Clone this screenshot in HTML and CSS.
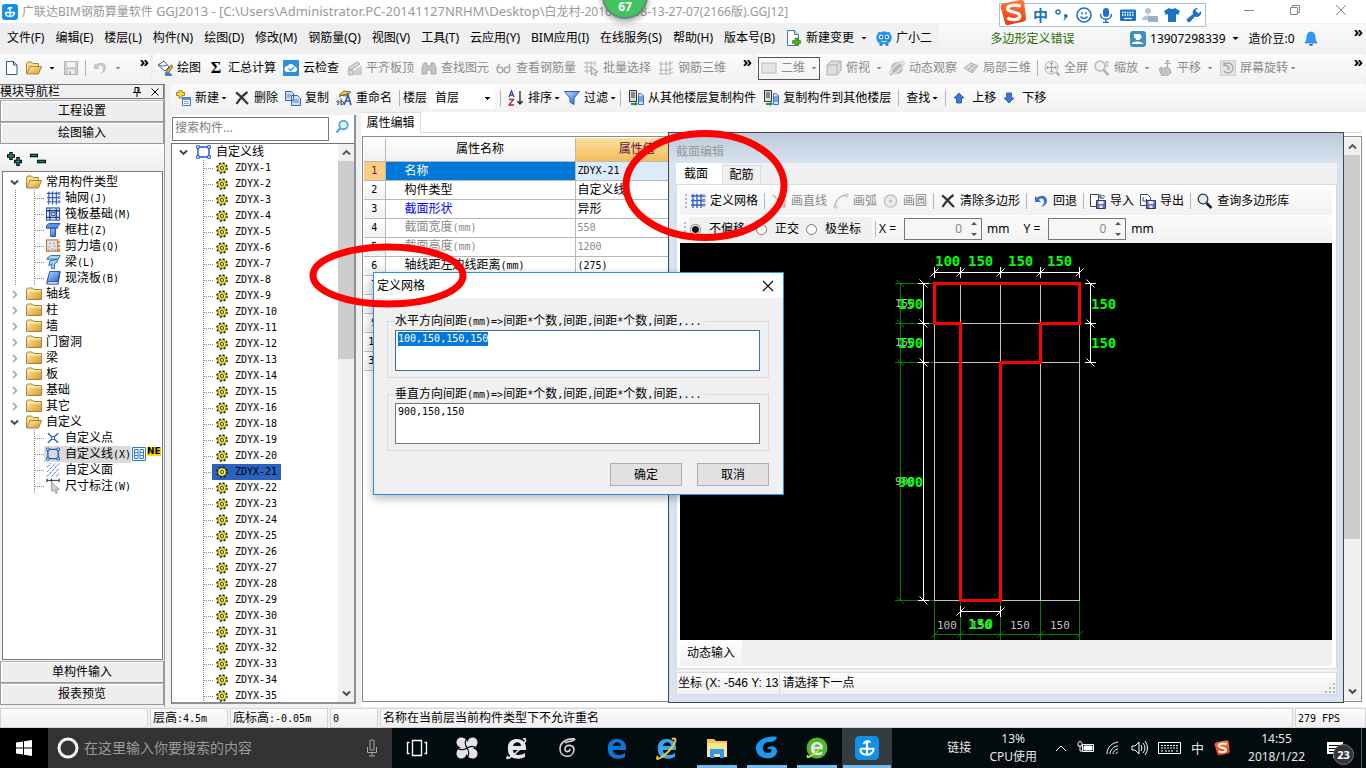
FILE: index.html
```html
<!DOCTYPE html>
<html lang="zh-CN">
<head>
<meta charset="utf-8">
<title>广联达BIM钢筋算量软件 GGJ2013</title>
<link rel="stylesheet" href="styles.css">
<script src="app.js" defer></script>
</head>
<body>
<svg class="defs" aria-hidden="true">
  <defs>
    <linearGradient id="gold" x1="0" y1="0" x2="1" y2="1"><stop offset="0" stop-color="#fff0b4"/><stop offset="1" stop-color="#d69a1e"/></linearGradient>
    <linearGradient id="blueg" x1="0" y1="0" x2="1" y2="1"><stop offset="0" stop-color="#b9dcff"/><stop offset="1" stop-color="#1f5fd0"/></linearGradient>
    <linearGradient id="orange" x1="0" y1="0" x2="0" y2="1"><stop offset="0" stop-color="#ff7a3c"/><stop offset="1" stop-color="#e8380d"/></linearGradient>
  </defs>
  <symbol id="i-app" viewBox="0 0 16 16"><rect width="16" height="16" rx="3" fill="#128fe8"/><path d="M6 5.500C6 3 10 3 10 4.500M8 3.500V12M3.500 8.500H13M3.500 8.500C3.500 11 5 12.500 8 12.500S12 11 12.500 9" fill="none" stroke="#fff" stroke-width="1.400"/></symbol>
  <symbol id="i-folder" viewBox="0 0 16 14"><path d="M.5 12.500v-10l1-1.500h5l1.500 1.500h7.500v10z" fill="url(#gold)" stroke="#a98434"/><path d="M1 4h14" stroke="#fff6cf"/></symbol>
  <symbol id="i-open" viewBox="0 0 16 14"><path d="M.5 12.500v-10l1-1.500h4l1.500 1.500h5.500v3" fill="#f5dc8c" stroke="#a98434"/><path d="M.8 13 4 5.500h11.500L12.500 13z" fill="url(#gold)" stroke="#a98434"/></symbol>
  <symbol id="i-new" viewBox="0 0 16 16"><path d="M2.500 1.500h7l3.500 3.500v9.500H2.500z" fill="#fff" stroke="#355a8c"/><path d="M9.500 1.500V5H13" fill="none" stroke="#355a8c"/></symbol>
  <symbol id="i-save" viewBox="0 0 16 16"><path d="M1.500 1.500h13v13h-13z" fill="#cfcfcf" stroke="#b4b4b4"/><path d="M4 2h8v5H4zM5 10h6v4H5z" fill="#f4f4f4"/><path d="M6 11h2v3H6z" fill="#b4b4b4"/></symbol>
  <symbol id="i-undo" viewBox="0 0 16 16"><path d="M2 3v6h6L5.800 6.800C8 4.500 11 5.500 11 8.500c0 2.500-1.500 4-3 5.500 4-1 6-3.500 6-6.500 0-5-6.500-6.500-10-2.700z" fill="currentColor"/></symbol>
  <symbol id="i-pen" viewBox="0 0 16 16"><path d="m1 5 6-4 5 6-4 4z" fill="#fff" stroke="#345c94"/><path d="M1 4c3 3 7 2 9 1" fill="none" stroke="#345c94"/><path d="M9 12 14 5l2 1.500-5 7-3 1z" fill="#e2b43c" stroke="#6a5010" stroke-width=".8"/><path d="M10 12c2 0 5 1 5 4H8z" fill="#3f7edb"/></symbol>
  <symbol id="i-cloud" viewBox="0 0 16 16"><rect width="16" height="16" rx="1" fill="#2b8fe0"/><path d="M4.500 12a3 3 0 0 1 0-6 3.800 3.800 0 0 1 7 .5A2.800 2.800 0 0 1 12 12z" fill="#fff"/><path d="m5.500 8.500 2 2 3.500-3.500" fill="none" stroke="#2b8fe0" stroke-width="1.300"/></symbol>
  <symbol id="i-align" viewBox="0 0 16 16"><path d="m2 8 9-6 3 2-9 6zM2 10h5v5H3z" fill="#d8d8d8" stroke="#a8a8a8"/><path d="M9 15v-5m2 5V8m2 7V7m2 8V6" stroke="#a8a8a8"/></symbol>
  <symbol id="i-bino" viewBox="0 0 16 16"><path d="M1 14V8l2-5h3v3h4V3h3l2 5v6h-5v-4H6v4z" fill="#c4c4c4" stroke="#9c9c9c" stroke-width=".8"/></symbol>
  <symbol id="i-glass" viewBox="0 0 16 16"><g fill="none" stroke="#a4a4a4" stroke-width="1.300"><circle cx="4" cy="10" r="2.800"/><circle cx="11" cy="10" r="2.800"/><path d="M1 9C1 6 2 5 4 4m9.800 5c0-3-.5-4-.8-5M7 10h1"/></g></symbol>
  <symbol id="i-batch" viewBox="0 0 16 16"><path d="M1 3h11M1 7h9M1 11h7M4 1v13M8 1v10M12 1v5" stroke="#b4b4b4" fill="none"/><path d="m8 7 7 5-3 .5 1.500 2.500-1.500.8-1.500-2.800L8.500 15z" fill="#e8e8e8" stroke="#a0a0a0"/></symbol>
  <symbol id="i-frame" viewBox="0 0 16 16"><path d="M1 4h10l4-2M1 10h10l4-2M3 1v13M8 1v13M12 1v13M1 14h10l4-2" stroke="#b0b0b0" fill="none"/></symbol>
  <symbol id="i-2d" viewBox="0 0 16 16"><rect x="1" y="3" width="14" height="10" fill="#e4e4e4" stroke="#bcbcbc"/></symbol>
  <symbol id="i-cube" viewBox="0 0 16 16"><path d="M1 5 5 1h10v9l-4 5H1z" fill="#dedede" stroke="#b0b0b0"/><path d="M1 5h10v10M11 5l4-4" fill="none" stroke="#b0b0b0"/></symbol>
  <symbol id="i-orbit" viewBox="0 0 16 16"><circle cx="8" cy="8" r="6" fill="#b8b8b8"/><ellipse cx="8" cy="8" rx="9" ry="3" transform="rotate(-40 8 8)" fill="none" stroke="#dcdcdc" stroke-width="2"/><path d="m1 15 5-4" stroke="#a8a8a8"/></symbol>
  <symbol id="i-part" viewBox="0 0 16 16"><path d="m1 8 7-5 7 3-6 7z" fill="#e4e4e4" stroke="#ababab"/><path d="m4 7 6 4M7 5l5 3M5 10l6-6M8 12l5-6" stroke="#ababab"/></symbol>
  <symbol id="i-full" viewBox="0 0 16 16"><circle cx="7.500" cy="7.500" r="6.500" fill="#eee" stroke="#b8b8b8"/><path d="M7.500 2.500v10m-5-5h10M6 4l1.500-1.500L9 4M6 11l1.500 1.500L9 11M4 6 2.500 7.500 4 9m7-3 1.500 1.500L11 9" fill="none" stroke="#a0a0a0"/><path d="m12 12 3.500 3.500" stroke="#aaa" stroke-width="2"/></symbol>
  <symbol id="i-zoom" viewBox="0 0 16 16"><circle cx="6" cy="6" r="5" fill="#f0f0f0" stroke="#b8b8b8" stroke-width="1.500"/><path d="m9.500 10 5 5" stroke="#b0b0b0" stroke-width="2.500"/><path d="M13 1v5m-2-3 2-2 2 2m-4 3h4" stroke="#b0b0b0" fill="none"/></symbol>
  <symbol id="i-hand" viewBox="0 0 16 16"><path d="M2 9 5 7l-1 3 3-2 3-1 3 2 1 4-4 3H5z" fill="#c4c4c4" stroke="#acacac"/><path d="M10.500 0v7M7 3.500h7M9 2l1.500-2L12 2" stroke="#acacac" stroke-width="1.200" fill="none"/></symbol>
  <symbol id="i-rot" viewBox="0 0 16 16"><rect x=".5" y=".5" width="15" height="15" fill="#e4e4e4" stroke="#d0d0d0"/><path d="M4 5a5 5 0 1 1 0 6M4 2v3.500h3.500" fill="none" stroke="#aaa" stroke-width="1.400"/><path d="M7 6h3v4H7z" fill="#bbb"/></symbol>
  <symbol id="i-add" viewBox="0 0 16 16"><path d="M4 0h3v2.500h2.500v3H7V8H4V5.500H1.500v-3H4z" fill="#ffd83c" stroke="#8a6d10" stroke-width=".8"/><path d="M7.500 7.500h8v8h-8z" fill="#fff" stroke="#4a7cc0"/><path d="M8 8h7v2H8z" fill="#5a94e0"/><path d="M9 11.500h5m-5 2h5" stroke="#8cb0dc"/></symbol>
  <symbol id="i-x" viewBox="0 0 16 16"><path d="M2 2.500C6 5 10 10 14 14M13.500 2C9 5 5 10 2.500 14" fill="none" stroke="#333" stroke-width="2.200"/></symbol>
  <symbol id="i-copy" viewBox="0 0 16 16"><path d="M.5 1.500h6l2 2v7h-8zM6.500 5.500h6l3 3v7h-9z" fill="#cfe2fb" stroke="#3a62a8"/><path d="M2 5h4M2 7h3m3 3h6m-6 2h6" stroke="#5584c8"/></symbol>
  <symbol id="i-rename" viewBox="0 0 16 16"><path d="m3 5 5-4 7 1-5 4z" fill="#f2ca4c" stroke="#886c14"/><path d="M3 7c3-3 6-1 9-4" stroke="#555" fill="none"/><path d="M1 14.500c3 0 2-4 1-4s-2 2 0 2m3-4v6c4 0 3-4 0-3" stroke="#333" fill="none"/><path d="m8 15 4-10 3 10m-5-4h4" fill="none" stroke="#2a5cc0" stroke-width="1.600"/></symbol>
  <symbol id="i-az" viewBox="0 0 16 16"><path d="m1 7 2.500-6L6 7M2 5h3" fill="none" stroke="#2c4ca8" stroke-width="1.300"/><path d="M1 9.500h4.500L1 15h5" fill="none" stroke="#a03030" stroke-width="1.300"/><path d="M12 1v13m-2.500-3 2.500 3 2.500-3" fill="none" stroke="#222" stroke-width="1.300"/></symbol>
  <symbol id="i-filter" viewBox="0 0 16 16"><path d="M.5 1.500h15L10 8v6.500L6 12V8z" fill="url(#blueg)" stroke="#2a5cb8"/></symbol>
  <symbol id="i-floor" viewBox="0 0 16 16"><path d="M1.500.5h7v11h-7z" fill="#ddd" stroke="#333"/><path d="M3 3h4M3 5h4M3 7h4" stroke="#333"/><path d="M10.500 3.500h2l3 2v9h-5z" fill="#cfe2fb" stroke="#3a72c8"/><path d="M11 7h4m-4 2h4m-4 2h4" stroke="#2a62c8"/><path d="M3 13h4v-2l3 3-3 2v-1H3z" fill="#20963a"/></symbol>
  <symbol id="i-up" viewBox="0 0 12 12"><path d="m6 1 5 5H8.500v5h-5V6H1z" fill="#3d74dc" stroke="#2450a8" stroke-width=".8"/></symbol>
  <symbol id="i-down" viewBox="0 0 12 12"><path d="M6 11 1 6h2.500V1h5v5H11z" fill="#3d74dc" stroke="#2450a8" stroke-width=".8"/></symbol>
  <symbol id="i-doc" viewBox="0 0 16 16"><path d="M1.500.5h7l4 4v11h-11z" fill="#fff" stroke="#3a7cc0"/><path d="M8.500.5v4h4" fill="#cfe2fb" stroke="#3a7cc0"/><path d="M9 8h3v2.500h2.500v3H12V16H9v-2.500H6.500v-3H9z" fill="#4cb020" stroke="#2f7a10" stroke-width=".6"/></symbol>
  <symbol id="i-owl" viewBox="0 0 16 16"><path d="M8 1.500c2 0 3 .5 4 1 1.500-1 2.500 0 2 1.500C16 5.500 16 7 15.500 8c0 4-3 6-7.500 6S.5 12 .5 8C0 7 0 5.500 2 4 1.500 2.500 2.500 1.500 4 2.500c1-.5 2-1 4-1z" fill="#1e96ea"/><path d="M3.500 13.500h3v2.300h-3zm6 0h3v2.300h-3z" fill="#1779c8"/><circle cx="5" cy="7" r="2.200" fill="#fff"/><circle cx="11" cy="7" r="2.200" fill="#fff"/><circle cx="5.300" cy="7" r="1.100" fill="#123"/><circle cx="10.700" cy="7" r="1.100" fill="#123"/><path d="M5.500 11c1.500 1.200 3.500 1.200 5 0" fill="none" stroke="#fff"/></symbol>
  <symbol id="i-user" viewBox="0 0 16 16"><rect width="16" height="16" rx="3" fill="#3d8fc4"/><path d="M4 3h6l2 3-2 2v1H6V8L4 6z" fill="#fff"/><path d="M2 12c2-2 8-2 10 0l2 1H2z" fill="#fff"/></symbol>
  <symbol id="i-bell" viewBox="0 0 14 16"><path d="M7 1C4 1 3 3.500 3 6c0 3-1 4-2 6h12c-1-2-2-3-2-6 0-2.500-1-5-4-5z" fill="#2f9bf5" stroke="#1470c0" stroke-width=".6"/><path d="M5 13h4c0 2.500-4 2.500-4 0z" fill="#1470c0"/></symbol>
  <symbol id="i-grid" viewBox="0 0 16 16"><path d="M1 3h13M1 7.500h13M1 12h13M3 1v14M7 1v14M11 1v14" stroke="#2d5fc4" stroke-width="1.300" fill="none"/><path d="M13 2h2v2h-2zm0 4.500h2v2h-2zm0 4.500h2v2h-2z" fill="#fff" stroke="#2d5fc4" stroke-width=".8"/></symbol>
  <symbol id="i-raft" viewBox="0 0 16 16"><rect x=".5" y="1.500" width="14" height="13" fill="#dfeaff" stroke="#1c3f96"/><path d="M1 4.500h13M1 11.500h13M4 2v12M11 2v12" stroke="#1c3f96" stroke-width="1.400"/><path d="M6 6.500h3.500v3H6z" fill="#fff" stroke="#1c3f96"/></symbol>
  <symbol id="i-col" viewBox="0 0 16 16"><path d="M.5 3.500 3 1h12l-2.500 3v2H.5z" fill="#5f93e6" stroke="#1c4aa8"/><path d="M5 6h5v9H5z" fill="url(#blueg)" stroke="#1c4aa8"/></symbol>
  <symbol id="i-wall" viewBox="0 0 16 16"><rect x=".5" y="1.500" width="12" height="12" fill="#e2e2e2" stroke="#c05828"/><path d="M3 9h1m2 2h1m2-3h1M4 5h1m4 7h1M2 12h1m5-7h1" stroke="#555"/><path d="M14 3v2m0 2v2m0 2v3" stroke="#c8742c" stroke-width="2"/></symbol>
  <symbol id="i-beam" viewBox="0 0 16 16"><path d="M1 4 5 1h10l-2 4H1zM4 7l8-2v3l-3 2v5H6v-5L3 12z" fill="#a8d4f6" stroke="#1c66b8"/></symbol>
  <symbol id="i-slab" viewBox="0 0 16 16"><path d="M4 1h11l-2 11H1z" fill="url(#blueg)" stroke="#1c4aa8"/><path d="M1 12v2.500h12V12l2-11" fill="none" stroke="#1c3f96"/></symbol>
  <symbol id="i-point" viewBox="0 0 16 16"><path d="m2 3 11 10M13 3 2 13" stroke="#1c56b8" stroke-width="1.300"/><path d="M6 6.500h3v3H6z" fill="#fff" stroke="#1c56b8"/></symbol>
  <symbol id="i-line" viewBox="0 0 16 16"><path d="M2 3h11v10H2z" fill="none" stroke="#1c56c8" stroke-width="1.400"/><path d="M.7 1.700h2.600v2.600H.7zm11 0h2.600v2.600h-2.600zm0 10h2.600v2.600h-2.600zm-11 0h2.600v2.600H.7z" fill="#fff" stroke="#1c56c8"/></symbol>
  <symbol id="i-face" viewBox="0 0 16 16"><path d="m1 5 4-4M1 10l9-9M1 15 14 1M6 15l8-9m-3 9 3-4" stroke="#2a66d0" stroke-dasharray="3 1"/></symbol>
  <symbol id="i-dim" viewBox="0 0 16 16"><path d="M1 0v4M14 0v4M6 0v4M1 2h13" stroke="#222"/><path d="M6 4v10l2.500-2 2 4 2-1-2-3.500h3.500z" fill="#d4d4d4" stroke="#888" stroke-width=".8"/></symbol>
  <symbol id="i-gear" viewBox="0 0 11 11"><circle cx="5.500" cy="5.500" r="4" fill="#ffee20"/><circle cx="5.500" cy="5.500" r="4.700" fill="none" stroke="#111" stroke-width="1.200" stroke-dasharray="1.900 1.790"/><circle cx="5.500" cy="5.500" r="3.700" fill="none" stroke="#333" stroke-width=".6"/><circle cx="5.500" cy="5.500" r="1.500" fill="none" stroke="#222" stroke-width=".8"/></symbol>
  <symbol id="i-find" viewBox="0 0 16 16"><circle cx="9.500" cy="6" r="4.200" fill="#e4f4ff" stroke="#55aee8" stroke-width="2"/><path d="m6.500 9-4 4.500" stroke="#55aee8" stroke-width="2.600"/></symbol>
  <symbol id="i-mag" viewBox="0 0 16 16"><circle cx="6" cy="6" r="4.800" fill="#dff0fc" stroke="#333" stroke-width="1.300"/><path d="m9.500 10 5 5" stroke="#222" stroke-width="2.600"/></symbol>
  <symbol id="i-seg" viewBox="0 0 16 16"><path d="m2 2 11 11m-6 1h7V7" fill="none" stroke="#bdbdbd" stroke-width="1.600"/></symbol>
  <symbol id="i-arc" viewBox="0 0 16 16"><path d="M2 14C2 8 6 3 13 2" fill="none" stroke="#bdbdbd" stroke-width="1.400"/><path d="M1 12h3v3H1zm11-11h3v3h-3z" fill="#ddd" stroke="#bbb" stroke-width=".6"/></symbol>
  <symbol id="i-circ" viewBox="0 0 16 16"><circle cx="7.500" cy="8" r="6.200" fill="#eaeaea" stroke="#bdbdbd" stroke-width="1.300"/><circle cx="7.500" cy="8" r="1.200" fill="#b0b0b0"/></symbol>
  <symbol id="i-imp" viewBox="0 0 16 16"><path d="M.5 1.500h8v12h-8z" fill="#fff" stroke="#444"/><path d="M10 1v4h4m-4-1c2-2 4-2 5 0" fill="none" stroke="#345"/><path d="M6.500 7.500h9v8h-9z" fill="#6b6fc4" stroke="#2f2f7c"/><path d="M8.500 8h5v3h-5zm1 4.500h3V15h-3z" fill="#eee"/></symbol>
  <symbol id="i-exp" viewBox="0 0 16 16"><path d="M.5 1.500h7l3 3v8H.5z" fill="#fff" stroke="#446"/><path d="M3 4v4h5m-2-2 2 2-2 2" fill="none" stroke="#345"/><path d="M6.500 7.500h9v8h-9z" fill="#6b6fc4" stroke="#2f2f7c"/><path d="M8.500 8h5v3h-5zm1 4.500h3V15h-3z" fill="#eee"/></symbol>
  <symbol id="i-e" viewBox="0 0 24 24"><path d="M3 14C2 7 6 3 12 3s9 4 9 9v2H8c0 6 8 6 12 3v4C12 25 3 22 3 14zm5-4h8c0-5-7-5-8 0z" fill="currentColor"/></symbol>
  <symbol id="i-s" viewBox="0 0 28 28"><path d="M3 5Q13 2 23 1q2 0 2.500 2l2 17q0 3-3 3.500L9 27q-3 0-3.500-3L1 8q0-2 2-3z" fill="url(#orange)"/><path d="M22 7.500C15 5 8 7 8.500 10.500S21 13 21 17.500s-9 5-13 2" fill="none" stroke="#fff" stroke-width="3.400"/></symbol>
  <symbol id="tick-x" viewBox="-6 -6 12 12" overflow="visible"><path d="M0-5.500v11M-4 4l8-8" fill="none" stroke="currentColor"/></symbol>
  <symbol id="tick-y" viewBox="-6 -6 12 12" overflow="visible"><path d="M-5.500 0h11M-4-4l8 8" fill="none" stroke="currentColor"/></symbol>
  <symbol id="c-down" viewBox="0 0 9 9"><path d="m1 2.500 3.500 3.500L8 2.500" fill="none" stroke="#444" stroke-width="1.900"/></symbol>
  <symbol id="c-up" viewBox="0 0 9 9"><path d="M1 6.500 4.500 3 8 6.500" fill="none" stroke="#555" stroke-width="1.900"/></symbol>
  <symbol id="c-right" viewBox="0 0 9 9"><path d="m3 1 3.500 3.500L3 8" fill="none" stroke="#a0a0a0" stroke-width="1.500"/></symbol>
</svg>

<div class="app">
<header class="titlebar">
  <svg class="ic"><use href="#i-app"/></svg>
  <h1>广联达BIM钢筋算量软件 <span class="path">GGJ2013 - [C:\Users\Administrator.PC-20141127NRHM\Desktop\</span>白龙村-2016-10-08-13-27-07(2166版).GGJ12]</h1>
  <div class="winbtns">
    <button aria-label="最小化"><svg viewBox="0 0 12 12"><path d="M1 6.500h10"/></svg></button>
    <button aria-label="还原"><svg viewBox="0 0 12 12"><path d="M1.500 3.500h7v7h-7zM3.500 3.500v-2h7v7h-2"/></svg></button>
    <button aria-label="关闭"><svg viewBox="0 0 12 12"><path d="m1 1 10 10M11 1 1 11"/></svg></button>
  </div>
</header>

<nav class="menubar">
  <button>文件(F)</button><button>编辑(E)</button><button>楼层(L)</button><button>构件(N)</button><button>绘图(D)</button><button>修改(M)</button><button>钢筋量(Q)</button><button>视图(V)</button><button>工具(T)</button><button>云应用(Y)</button><button>BIM应用(I)</button><button>在线服务(S)</button><button>帮助(H)</button><button>版本号(B)</button>
  <button class="tb"><svg class="ic"><use href="#i-doc"/></svg>新建变更<i class="caret"></i></button>
  <button class="tb"><svg class="ic"><use href="#i-owl"/></svg>广小二</button>
  <div class="notice">多边形定义错误</div>
  <div class="account">
    <button class="tb"><svg class="ic"><use href="#i-user"/></svg>13907298339<i class="caret"></i></button>
    <button>造价豆:0</button>
    <svg class="ic"><use href="#i-bell"/></svg>
    <b class="more">»</b>
  </div>
</nav>

<div class="toolrow">
  <div class="bar bar-a">
    <button class="tb" aria-label="新建"><svg class="ic"><use href="#i-new"/></svg></button>
    <button class="tb" aria-label="打开"><svg class="ic"><use href="#i-open"/></svg><i class="caret"></i></button>
    <button class="tb" aria-label="保存"><svg class="ic"><use href="#i-save"/></svg></button>
    <i class="sep"></i>
    <button class="tb off" aria-label="撤销"><svg class="ic pale"><use href="#i-undo"/></svg><i class="caret"></i></button>
    <b class="more">»</b>
  </div>
  <div class="bar bar-b">
    <button class="tb"><svg class="ic"><use href="#i-pen"/></svg>绘图</button>
    <button class="tb"><b class="ic sigma">Σ</b>汇总计算</button>
    <button class="tb"><svg class="ic"><use href="#i-cloud"/></svg>云检查</button>
    <button class="tb off"><svg class="ic"><use href="#i-align"/></svg>平齐板顶</button>
    <button class="tb off"><svg class="ic"><use href="#i-bino"/></svg>查找图元</button>
    <button class="tb off"><svg class="ic"><use href="#i-glass"/></svg>查看钢筋量</button>
    <button class="tb off"><svg class="ic"><use href="#i-batch"/></svg>批量选择</button>
    <button class="tb off"><svg class="ic"><use href="#i-frame"/></svg>钢筋三维</button>
    <b class="more">»</b>
  </div>
  <div class="bar bar-c">
    <button class="tb off boxed"><svg class="ic"><use href="#i-2d"/></svg>二维<i class="caret"></i></button>
    <button class="tb off"><svg class="ic"><use href="#i-cube"/></svg>俯视<i class="caret"></i></button>
    <button class="tb off"><svg class="ic"><use href="#i-orbit"/></svg>动态观察</button>
    <button class="tb off"><svg class="ic"><use href="#i-part"/></svg>局部三维</button>
    <i class="sep"></i>
    <button class="tb off"><svg class="ic"><use href="#i-full"/></svg>全屏</button>
    <button class="tb off"><svg class="ic"><use href="#i-zoom"/></svg>缩放<i class="caret"></i></button>
    <button class="tb off"><svg class="ic"><use href="#i-hand"/></svg>平移<i class="caret"></i></button>
    <button class="tb off tight"><svg class="ic"><use href="#i-rot"/></svg>屏幕旋转<i class="caret"></i></button>
    <b class="more">»</b>
  </div>
</div>

<div class="workspace">
  <aside class="nav">
    <div class="navhead"><span>模块导航栏</span>
      <svg viewBox="0 0 10 12" class="pin"><path d="M3 1.500h4v5H3zM1 6.500h8M5 7v4M6 2v4" fill="none" stroke="#000"/></svg>
      <svg viewBox="0 0 10 12" class="pin"><path d="m1.500 2.500 7 7m0-7-7 7" stroke="#000"/></svg>
    </div>
    <button class="navbtn">工程设置</button>
    <button class="navbtn">绘图输入</button>
    <div class="navtools">
      <svg viewBox="0 0 40 16" width="40" height="16"><path d="M5 1v8M1 5h8m3 1v9m-4-4.500h8M24 4.500h8M31 10.500h9" stroke="#000" stroke-width="3.400"/><path d="M5 2v6M2 5h6m4 2v7m-3-3.500h6M25 4.500h6m1 6h7" stroke="#10908c" stroke-width="1.400"/></svg>
    </div>
    <ul class="tree navtree">
      <li class="l1"><svg class="chev"><use href="#c-down"/></svg><svg class="fold"><use href="#i-open"/></svg>常用构件类型</li>
      <li class="l2 thru"><svg class="ic"><use href="#i-grid"/></svg><span>轴网<i class="m">(J)</i></span></li>
      <li class="l2 thru"><svg class="ic"><use href="#i-raft"/></svg><span>筏板基础<i class="m">(M)</i></span></li>
      <li class="l2 thru"><svg class="ic"><use href="#i-col"/></svg><span>框柱<i class="m">(Z)</i></span></li>
      <li class="l2 thru"><svg class="ic"><use href="#i-wall"/></svg><span>剪力墙<i class="m">(Q)</i></span></li>
      <li class="l2 thru"><svg class="ic"><use href="#i-beam"/></svg><span>梁<i class="m">(L)</i></span></li>
      <li class="l2 thru end"><svg class="ic"><use href="#i-slab"/></svg><span>现浇板<i class="m">(B)</i></span></li>
      <li class="l1 shut"><svg class="chev"><use href="#c-right"/></svg><svg class="fold"><use href="#i-folder"/></svg>轴线</li>
      <li class="l1 shut"><svg class="chev"><use href="#c-right"/></svg><svg class="fold"><use href="#i-folder"/></svg>柱</li>
      <li class="l1 shut"><svg class="chev"><use href="#c-right"/></svg><svg class="fold"><use href="#i-folder"/></svg>墙</li>
      <li class="l1 shut"><svg class="chev"><use href="#c-right"/></svg><svg class="fold"><use href="#i-folder"/></svg>门窗洞</li>
      <li class="l1 shut"><svg class="chev"><use href="#c-right"/></svg><svg class="fold"><use href="#i-folder"/></svg>梁</li>
      <li class="l1 shut"><svg class="chev"><use href="#c-right"/></svg><svg class="fold"><use href="#i-folder"/></svg>板</li>
      <li class="l1 shut"><svg class="chev"><use href="#c-right"/></svg><svg class="fold"><use href="#i-folder"/></svg>基础</li>
      <li class="l1 shut"><svg class="chev"><use href="#c-right"/></svg><svg class="fold"><use href="#i-folder"/></svg>其它</li>
      <li class="l1"><svg class="chev"><use href="#c-down"/></svg><svg class="fold"><use href="#i-open"/></svg>自定义</li>
      <li class="l2"><svg class="ic"><use href="#i-point"/></svg><span>自定义点</span></li>
      <li class="l2 cur"><svg class="ic"><use href="#i-line"/></svg><span class="curtext">自定义线<i class="m">(X)</i></span><svg class="book" viewBox="0 0 14 14"><path d="M.5.500h13v13H.5z" fill="#fff" stroke="#2a7cd0"/><path d="M2.500 2.500h3.500v9H2.500zM8 2.500h3.500v9H8zM2.500 5.500H6m-3.500 3H6m2-3h3.500m-3.500 3h3.500" fill="none" stroke="#2a7cd0"/></svg><b class="new">NE</b></li>
      <li class="l2"><svg class="ic"><use href="#i-face"/></svg><span>自定义面</span></li>
      <li class="l2 end"><svg class="ic"><use href="#i-dim"/></svg><span>尺寸标注<i class="m">(W)</i></span></li>
    </ul>
    <button class="navbtn">单构件输入</button>
    <button class="navbtn">报表预览</button>
  </aside>

  <main class="main">
    <div class="bar bar-d">
      <button class="tb tight"><svg class="ic"><use href="#i-add"/></svg>新建<i class="caret"></i></button>
      <button class="tb"><svg class="ic"><use href="#i-x"/></svg>删除</button>
      <button class="tb"><svg class="ic"><use href="#i-copy"/></svg>复制</button>
      <button class="tb"><svg class="ic"><use href="#i-rename"/></svg>重命名</button>
      <i class="sep"></i>
      <label class="floorlabel" for="floor">楼层</label>
      <select id="floor"><option>首层</option></select>
      <i class="sep"></i>
      <button class="tb tight close"><svg class="ic"><use href="#i-az"/></svg>排序<i class="caret"></i></button>
      <button class="tb tight close"><svg class="ic"><use href="#i-filter"/></svg>过滤<i class="caret"></i></button>
      <i class="sep"></i>
      <button class="tb"><svg class="ic"><use href="#i-floor"/></svg>从其他楼层复制构件</button>
      <button class="tb"><svg class="ic"><use href="#i-floor"/></svg>复制构件到其他楼层</button>
      <i class="sep"></i>
      <button class="tb tight">查找<i class="caret"></i></button>
      <i class="sep"></i>
      <button class="tb mv"><svg class="ic sm"><use href="#i-up"/></svg>上移</button>
      <button class="tb mv"><svg class="ic sm"><use href="#i-down"/></svg>下移</button>
    </div>
    <div class="panes">
      <section class="list">
        <div class="search"><input type="text" placeholder="搜索构件..." aria-label="搜索构件"><button aria-label="搜索"><svg class="ic"><use href="#i-find"/></svg></button></div>
        <div class="listbox">
          <ul class="tree">
            <li class="root"><svg class="chev"><use href="#c-down"/></svg><svg class="ic"><use href="#i-line"/></svg>自定义线</li>
            <li class="z"><span><svg><use href="#i-gear"/></svg>ZDYX-1</span></li>
            <li class="z"><span><svg><use href="#i-gear"/></svg>ZDYX-2</span></li>
            <li class="z"><span><svg><use href="#i-gear"/></svg>ZDYX-3</span></li>
            <li class="z"><span><svg><use href="#i-gear"/></svg>ZDYX-4</span></li>
            <li class="z"><span><svg><use href="#i-gear"/></svg>ZDYX-5</span></li>
            <li class="z"><span><svg><use href="#i-gear"/></svg>ZDYX-6</span></li>
            <li class="z"><span><svg><use href="#i-gear"/></svg>ZDYX-7</span></li>
            <li class="z"><span><svg><use href="#i-gear"/></svg>ZDYX-8</span></li>
            <li class="z"><span><svg><use href="#i-gear"/></svg>ZDYX-9</span></li>
            <li class="z"><span><svg><use href="#i-gear"/></svg>ZDYX-10</span></li>
            <li class="z"><span><svg><use href="#i-gear"/></svg>ZDYX-11</span></li>
            <li class="z"><span><svg><use href="#i-gear"/></svg>ZDYX-12</span></li>
            <li class="z"><span><svg><use href="#i-gear"/></svg>ZDYX-13</span></li>
            <li class="z"><span><svg><use href="#i-gear"/></svg>ZDYX-14</span></li>
            <li class="z"><span><svg><use href="#i-gear"/></svg>ZDYX-15</span></li>
            <li class="z"><span><svg><use href="#i-gear"/></svg>ZDYX-16</span></li>
            <li class="z"><span><svg><use href="#i-gear"/></svg>ZDYX-18</span></li>
            <li class="z"><span><svg><use href="#i-gear"/></svg>ZDYX-19</span></li>
            <li class="z"><span><svg><use href="#i-gear"/></svg>ZDYX-20</span></li>
            <li class="z on"><span><svg><use href="#i-gear"/></svg>ZDYX-21</span></li>
            <li class="z"><span><svg><use href="#i-gear"/></svg>ZDYX-22</span></li>
            <li class="z"><span><svg><use href="#i-gear"/></svg>ZDYX-23</span></li>
            <li class="z"><span><svg><use href="#i-gear"/></svg>ZDYX-24</span></li>
            <li class="z"><span><svg><use href="#i-gear"/></svg>ZDYX-25</span></li>
            <li class="z"><span><svg><use href="#i-gear"/></svg>ZDYX-26</span></li>
            <li class="z"><span><svg><use href="#i-gear"/></svg>ZDYX-27</span></li>
            <li class="z"><span><svg><use href="#i-gear"/></svg>ZDYX-28</span></li>
            <li class="z"><span><svg><use href="#i-gear"/></svg>ZDYX-29</span></li>
            <li class="z"><span><svg><use href="#i-gear"/></svg>ZDYX-30</span></li>
            <li class="z"><span><svg><use href="#i-gear"/></svg>ZDYX-31</span></li>
            <li class="z"><span><svg><use href="#i-gear"/></svg>ZDYX-32</span></li>
            <li class="z"><span><svg><use href="#i-gear"/></svg>ZDYX-33</span></li>
            <li class="z"><span><svg><use href="#i-gear"/></svg>ZDYX-34</span></li>
            <li class="z"><span><svg><use href="#i-gear"/></svg>ZDYX-35</span></li>
          </ul>
          <div class="scroll"><svg><use href="#c-up"/></svg><i class="thumb short"></i><svg><use href="#c-down"/></svg></div>
        </div>
      </section>

      <section class="props">
        <div class="proptabs"><button>属性编辑</button></div>
        <div class="propbox">
          <div class="tablewrap">
          <table>
            <thead><tr><th class="n"></th><th class="k">属性名称</th><th class="v">属性值</th></tr></thead>
            <tbody>
              <tr class="sel"><th>1</th><td>名称</td><td><i class="m">ZDYX-21</i></td></tr>
              <tr><th>2</th><td>构件类型</td><td>自定义线</td></tr>
              <tr class="link"><th>3</th><td>截面形状</td><td>异形</td></tr>
              <tr class="dim"><th>4</th><td>截面宽度<i class="m">(mm)</i></td><td><i class="m">550</i></td></tr>
              <tr class="dim"><th>5</th><td>截面高度<i class="m">(mm)</i></td><td><i class="m">1200</i></td></tr>
              <tr><th>6</th><td>轴线距左边线距离<i class="m">(mm)</i></td><td><i class="m">(275)</i></td></tr>
              <tr><th>7</th><td></td><td></td></tr>
              <tr><th>8</th><td></td><td></td></tr>
              <tr><th>9</th><td></td><td></td></tr>
              <tr><th>10</th><td></td><td></td></tr>
              <tr><th>30</th><td></td><td></td></tr>
            </tbody>
          </table>
          </div>
          <div class="scroll"><svg><use href="#c-up"/></svg><i class="thumb long"></i><svg><use href="#c-down"/></svg></div>
        </div>
      </section>
    </div>
  </main>
</div>

<footer class="status">
  <span class="s1"></span><span class="s2">层高<i class="m">:4.5m</i></span><span class="s3">底标高<i class="m">:-0.05m</i></span><span class="s4"><i class="m">0</i></span><span class="s5">名称在当前层当前构件类型下不允许重名</span><span class="s6"><i class="m">279 FPS</i></span>
</footer>

<footer class="taskbar">
  <button class="start" aria-label="开始"><svg width="18" height="18" viewBox="0 0 18 18"><path d="m1 3.500 7-1v6H1zM9 2.300l8-1.300v7.500H9zM1 9.500h7v6l-7-1zM9 9.500h8V17l-8-1.300z" fill="#fff"/></svg></button>
  <label class="cortana"><svg width="22" height="22" viewBox="0 0 22 22"><circle cx="11" cy="11" r="9" fill="none" stroke="#f4f4f4" stroke-width="3"/></svg><input type="text" placeholder="在这里输入你要搜索的内容"><svg width="12" height="18" viewBox="0 0 12 18"><path d="M4 1.500q2-1.500 4 0V11H4zM1.500 8v5.500h9V8M6 13.500V17M3 17h6" fill="none" stroke="#a8a8a8"/></svg></label>
  <div class="apps">
    <button aria-label="任务视图"><svg viewBox="0 0 24 24"><path d="M7.500 4.500h9v15h-9zM4.500 6.500h-2v11h2m15-11h2v11h-2" fill="none" stroke="#fff" stroke-width="1.300"/></svg></button>
    <button aria-label="风扇"><svg viewBox="0 0 24 24" fill="#e4e4e4"><path id="blade" d="M12.500 12C8 13.500 1.500 11 1.500 6.500c0-3 2-5 5-5 4.500 0 7.500 5 6 10.500z"/><use href="#blade" transform="rotate(90 12 12)"/><use href="#blade" transform="rotate(180 12 12)"/><use href="#blade" transform="rotate(270 12 12)"/><path d="M12 12C10 9 10 5 12 2.500m0 9.500c3-2 7-2 9.500 0M12 12c2 3 2 7 0 9.500m0-9.500c-3 2-7 2-9.500 0" fill="none" stroke="#071012" stroke-width="1.200"/></svg></button>
    <button aria-label="浏览器" class="c-white"><svg viewBox="0 0 24 24"><use href="#i-e"/><path d="M3 20C-1 26 8 20 14 14S23 1 18 3" fill="none" stroke="#e8e8e8" stroke-width="1.600"/></svg></button>
    <button aria-label="旋风"><svg viewBox="0 0 24 24"><path d="M20 3c-8-1-15 3-15 10 0 9 13 10 14 1 0-6-9-6-9-1 0 4 5 3 5 0M20 3c-1 3-7 2-10 4" fill="none" stroke="#d8d8d8" stroke-width="1.600"/></svg></button>
    <button aria-label="Edge" class="c-edge"><svg viewBox="0 0 24 24"><use href="#i-e"/></svg></button>
    <button aria-label="IE" class="c-ie"><svg viewBox="0 0 24 24"><use href="#i-e"/><path d="M3 20C-1 27 9 20 14 15S24 0 17 3" fill="none" stroke="#f5c82c" stroke-width="2"/></svg></button>
    <button aria-label="文件资源管理器" class="open"><svg viewBox="0 0 24 24"><path d="M2 3h7l2 2h11v16H2z" fill="#f3c650"/><path d="M2 7h20v14H2z" fill="#ffe28c"/><path d="M5 13h14v9h-4v-4H9v4H5z" fill="#2f9be8"/></svg></button>
    <button aria-label="广联达" class="open"><svg viewBox="0 0 24 24"><path d="M22 1c-1 4-4 5-9 5-7 1-7 11 0 11 3 0 4-2 3-4h-4c2-5 11-3 10 3-1 9-20 9-21-3C0 4 12-1 22 1z" fill="#1c98f0"/></svg></button>
    <button aria-label="360浏览器" class="open c-white"><svg viewBox="0 0 24 24"><circle cx="12" cy="12" r="10.500" fill="#4cb82c"/><use href="#i-e" x="4" y="4" width="16" height="16"/><path d="M3 19C0 25 9 18 14 14" fill="none" stroke="#c8e84c" stroke-width="1.500"/></svg></button>
    <button aria-label="钢筋算量" class="open active"><svg viewBox="0 0 16 16"><use href="#i-app"/></svg></button>
  </div>
  <div class="tray">
    <span>链接</span>
    <span class="two">13%<br>CPU使用</span>
    <svg width="12" height="16" viewBox="0 0 12 16"><path d="m1 11 5-5 5 5"/></svg>
    <svg width="18" height="16" viewBox="0 0 18 16"><path d="M5.500 4.500h11v7h-11zM1 3v3h4V3M3 6v5h2M2 1v2m2-2v2"/><path d="M7 6h8v4H7z" fill="#fff"/></svg>
    <svg width="16" height="16" viewBox="0 0 16 16"><path d="M2 14C2 7 7 3 13 2M5 14c0-4 4-8 8-8M8 14c0-2 2-5 5-5m-2 5c0-1 1-2 2-2"/></svg>
    <svg width="17" height="16" viewBox="0 0 17 16"><path d="M1 6h3l4-4v12l-4-4H1zM10 5q2 3 0 6m2-8q4 5 0 10m2-12q5 7 0 14"/></svg>
    <svg width="23" height="16" viewBox="0 0 23 16"><path d="M.5 2.500h22v11H.5z"/><path d="M3 5.500h17M3 8h17M3 11h2m2 0h9m2 0h2" stroke-dasharray="2 1"/></svg>
    <span class="zh">中</span>
    <svg width="16" height="18" viewBox="0 0 28 28" class="nostroke"><use href="#i-s"/></svg>
    <time class="two">14:55<br>2018/1/22</time>
    <button class="action" aria-label="通知"><svg width="18" height="18" viewBox="0 0 18 18"><path d="M1 1h16v12h-6l-4 4v-4H1z" fill="#fff" stroke="none"/><path d="M3 4.500h12M3 7.500h12M3 10.500h8" stroke="#000"/></svg><b>23</b></button>
  </div>
</footer>

<section class="editor">
  <h2>截面编辑</h2>
  <div class="ebody">
    <div class="etabs"><button class="on">截面</button><button>配筋</button></div>
    <div class="epanel">
      <div class="bar ebar tools">
        <i class="grip"></i>
        <button class="tb"><svg class="ic"><use href="#i-grid"/></svg>定义网格</button>
        <i class="sep"></i>
        <button class="tb off"><svg class="ic"><use href="#i-seg"/></svg>画直线</button>
        <button class="tb off"><svg class="ic"><use href="#i-arc"/></svg>画弧</button>
        <button class="tb off"><svg class="ic"><use href="#i-circ"/></svg>画圆</button>
        <i class="sep"></i>
        <button class="tb"><svg class="ic"><use href="#i-x"/></svg>清除多边形</button>
        <i class="sep"></i>
        <button class="tb"><svg class="ic undo"><use href="#i-undo"/></svg>回退</button>
        <i class="sep"></i>
        <button class="tb"><svg class="ic"><use href="#i-imp"/></svg>导入</button>
        <button class="tb"><svg class="ic"><use href="#i-exp"/></svg>导出</button>
        <i class="sep"></i>
        <button class="tb"><svg class="ic"><use href="#i-mag"/></svg>查询多边形库</button>
      </div>
      <div class="bar ebar">
        <i class="grip"></i>
        <div class="radios">
          <label><input type="radio" name="off" checked>不偏移</label>
          <label><input type="radio" name="off">正交</label>
          <label><input type="radio" name="off">极坐标</label>
        </div>
        <i class="sep"></i>
        <label class="xy" for="ox">X =</label>
        <span class="num"><input id="ox" type="text" value="0"><svg viewBox="0 0 8 16"><path d="m1 4 3-3 3 3zm0 8 3 3 3-3z" fill="#555"/></svg></span>
        <span class="mm">mm</span>
        <label class="xy" for="oy">Y =</label>
        <span class="num"><input id="oy" type="text" value="0"><svg viewBox="0 0 8 16"><path d="m1 4 3-3 3 3zm0 8 3 3 3-3z" fill="#555"/></svg></span>
        <span class="mm">mm</span>
      </div>
      <div class="canvas">
        <svg viewBox="680 243 652 397" width="652" height="397">
          <path d="M934.500 283v318M960.500 283v318M1000.500 283v318M1040.500 283v318M1079.500 283v318M934 283.500h146M934 323.500h146M934 362.500h146M934 600.500h146" stroke="#c0c0c0"/>
          <g stroke="#008000" fill="none">
            <path d="M900.500 283v318M895 283.500h39M895 323.500h39M895 362.500h39M895 600.500h39M934.500 601v39M960.500 601v39M1000.500 601v39M1040.500 601v39M1079.500 601v39M934 634.500h146"/>
            <path d="m897 280 7 7m-7 33 7 7m-7 32 7 7m-7 231 7 7M931 638l7-7m19 7 7-7m33 7 7-7m33 7 7-7m32 7 7-7"/>
          </g>
          <g class="gray">
            <text x="895" y="307">150</text><text x="895" y="346">150</text><text x="895" y="485">900</text>
            <text x="937" y="629">100</text><text x="971" y="629">150</text><text x="1010" y="629">150</text><text x="1050" y="629">150</text>
          </g>
          <path d="M934 272.500h146M923.500 283v318M1090.500 283v80M960 611.500h41" stroke="#fff"/>
          <g color="#fff">
            <use href="#tick-x" x="928.500" y="266.500" width="12" height="12"/><use href="#tick-x" x="954.500" y="266.500" width="12" height="12"/><use href="#tick-x" x="994.500" y="266.500" width="12" height="12"/><use href="#tick-x" x="1034.500" y="266.500" width="12" height="12"/><use href="#tick-x" x="1073.500" y="266.500" width="12" height="12"/>
            <use href="#tick-x" x="954.500" y="605.500" width="12" height="12"/><use href="#tick-x" x="994.500" y="605.500" width="12" height="12"/>
            <use href="#tick-y" x="917.500" y="277.500" width="12" height="12"/><use href="#tick-y" x="917.500" y="317.500" width="12" height="12"/><use href="#tick-y" x="917.500" y="356.500" width="12" height="12"/><use href="#tick-y" x="917.500" y="594.500" width="12" height="12"/>
            <use href="#tick-y" x="1084.500" y="277.500" width="12" height="12"/><use href="#tick-y" x="1084.500" y="317.500" width="12" height="12"/><use href="#tick-y" x="1084.500" y="356.500" width="12" height="12"/>
          </g>
          <path d="M934.500 283.500h145v40h-39v39h-40v238h-40v-277h-26z" fill="none" stroke="red" stroke-width="3"/>
          <g class="lime">
            <text x="935" y="266">100</text><text x="968" y="266">150</text><text x="1008" y="266">150</text><text x="1047" y="266">150</text>
            <text x="898" y="309">150</text><text x="898" y="348">150</text><text x="898" y="487">900</text>
            <text x="1091" y="309">150</text><text x="1091" y="348">150</text><text x="968" y="629">150</text>
          </g>
        </svg>
      </div>
      <div class="dyn"><button>动态输入</button></div>
    </div>
    <div class="estatus"><span>坐标 (X: -546 Y: 13</span><span>请选择下一点</span><svg width="12" height="12" viewBox="0 0 12 12"><path d="M9 1h2v2H9zM9 5h2v2H9zM5 5h2v2H5zM9 9h2v2H9zM5 9h2v2H5zM1 9h2v2H1z" fill="#b8b8b8"/></svg></div>
  </div>
</section>

<form class="dialog">
  <div class="dtitle"><h2>定义网格</h2><button type="button" aria-label="关闭"><svg width="12" height="12" viewBox="0 0 12 12"><path d="m1 1 10 10M11 1 1 11" stroke="#111" stroke-width="1.200"/></svg></button></div>
  <div class="dbody">
    <fieldset>
      <legend><label for="hs">水平方向间距<i class="m">(mm)=&gt;</i>间距<i class="m">*</i>个数<i class="m">,</i>间距<i class="m">,</i>间距<i class="m">*</i>个数<i class="m">,</i>间距<i class="m">,...</i></label></legend>
      <textarea id="hs" class="focus">100,150,150,150</textarea>
    </fieldset>
    <fieldset>
      <legend><label for="vs">垂直方向间距<i class="m">(mm)=&gt;</i>间距<i class="m">*</i>个数<i class="m">,</i>间距<i class="m">,</i>间距<i class="m">*</i>个数<i class="m">,</i>间距<i class="m">,...</i></label></legend>
      <textarea id="vs">900,150,150</textarea>
    </fieldset>
    <div class="dbtns"><button type="button">确定</button><button type="button">取消</button></div>
  </div>
</form>

<div class="ime">
  <svg width="28" height="27" viewBox="0 0 28 28" class="logo"><use href="#i-s"/></svg>
  <b>中</b>
  <svg viewBox="0 0 16 16"><circle cx="4" cy="5" r="2" fill="none" stroke="#1b74c5" stroke-width="1.500"/><path d="M10 8a2 2 0 1 1 2 3q0 2-3 3 2-2 1.500-3.500z" fill="#1b74c5"/></svg>
  <svg viewBox="0 0 16 16"><circle cx="8" cy="8" r="7" fill="none" stroke="#1b74c5" stroke-width="1.600"/><path d="M6 5v2.500m4-2.500v2.500M4.500 9.500q3.500 4 7 0" fill="none" stroke="#1b74c5" stroke-width="1.400"/></svg>
  <svg viewBox="0 0 16 16"><rect x="5" y="1" width="6" height="9" rx="3" fill="#1b74c5"/><path d="M2.500 7c0 7 11 7 11 0M8 12v3m-3 .5h6" fill="none" stroke="#1b74c5" stroke-width="1.500"/></svg>
  <svg viewBox="0 0 16 16"><rect y="2.500" width="16" height="11.500" rx="1" fill="#1b74c5"/><path d="M2 5.500h12M2 8h12" stroke="#fff" stroke-width="1.300" stroke-dasharray="1.500 1"/><path d="M4 11.500h8" stroke="#fff" stroke-width="1.300"/></svg>
  <svg viewBox="0 0 16 16" fill="#b8c4d4"><circle cx="6" cy="4" r="3"/><path d="M0 13c0-6 11-6 11 0z"/><rect x="6" y="9" width="10" height="6" rx="1" fill="#9fb0c6"/></svg>
  <svg viewBox="0 0 16 16"><path d="M5 1q3 2 6 0l5 3-2 4-2-1v8H4V7L2 8 0 4z" fill="#1b74c5"/></svg>
  <svg viewBox="0 0 16 16"><path d="M15 4a4.500 4.500 0 0 1-6 5.500L4 15q-2 1-3-1t0-2l6-5a4.500 4.500 0 0 1 5-6L9.500 3.500l3 3z" fill="#1b74c5"/></svg>
</div>
<div class="ball">67</div>
<svg class="marks" viewBox="300 120 500 200" width="500" height="200"><g fill="none" stroke="#fe0000" stroke-width="7"><ellipse cx="705" cy="185.500" rx="79" ry="52"/><ellipse cx="388" cy="275.500" rx="75" ry="28.500"/></g></svg>
</div>
</body>
</html>
```
FILE: styles.css
```css
* { box-sizing: border-box; }
body {
  margin: 0;
  font: 12px/16px "Noto Sans", "Noto Sans CJK SC", sans-serif;
  color: #000;
  background: #f0f0f0;
}
button, input, select, textarea { font: inherit; color: inherit; margin: 0; padding: 0; border: 0; background: none; border-radius: 0; outline: none; }
button { white-space: nowrap; }
h1, h2, ul { margin: 0; padding: 0; font-weight: normal; font-size: 12px; list-style: none; }
svg { flex: none; display: block; }
.defs { position: absolute; width: 0; height: 0; }
.m { font: normal 10px/16px "DejaVu Sans Mono", monospace; white-space: pre; }
.app { position: relative; display: flex; flex-direction: column; height: 100vh; overflow: hidden; }

/* title bar */
.titlebar { display: flex; align-items: center; gap: 4px; height: 23px; padding-left: 2px; background: #fff; color: #999; }
.titlebar h1 { flex: 1; white-space: nowrap; overflow: hidden; font-size: 12px; }
.path { font-size: 13px; }
.winbtns { display: flex; padding: 0 2px 3px 0; }
.winbtns button { width: 46px; height: 20px; display: grid; place-items: center; }
.winbtns svg { width: 12px; height: 12px; fill: none; stroke: #888; }

.ic { width: 16px; height: 16px; display: inline-block; }
.ic.sm { width: 12px; height: 12px; }
.sigma { font: bold 16px/16px "Liberation Serif", serif; text-align: center; }
.caret { width: 6px; height: 3px; margin: 0 2px 0 3px; background: currentColor; clip-path: polygon(0 0, 100% 0, 50% 100%); }
.tb { display: flex; align-items: center; gap: 4px; }
.tb.tight .caret { margin: 0 0 0 -2px; }
.tb.close .caret { margin-right: -3px; }
.off { color: #8a8a8a; }
.pale { color: #c4c4c4; }
.undo { color: #3e6fd0; }
.sep { width: 1px; height: 16px; background: #b4b4b4; flex: none; }
.more { align-self: flex-start; margin: 0 0 0 auto; font-size: 15px; line-height: 14px; }

.menubar { display: flex; align-items: stretch; gap: 11px; height: 30px; padding-left: 7px; background: linear-gradient(90deg, #eee, #f2f2f2); white-space: nowrap; }
.menubar .tb + .tb { margin-left: -4px; }
.notice { flex: none; width: 187px; margin: 1px 0 0 -4px; display: grid; place-items: center; color: #2a6a00; background: linear-gradient(#fafafa, #f0f0f0); border-radius: 3px; }
.account { flex: 1; display: flex; align-items: center; gap: 8px; margin: 1px 0 0 -10px; padding: 0 3px 0 3px; background: linear-gradient(#fafafa, #f0f0f0); border-radius: 3px; }

.toolrow { display: flex; gap: 3px; height: 31px; padding-top: 1px; }
.bar { display: flex; align-items: center; gap: 7px; background: linear-gradient(#fcfcfc, #f1f1f1); border-radius: 3px; white-space: nowrap; }
.bar-a { width: 150px; padding: 0 1px 2px 4px; gap: 6px; }
.bar-b { width: 600px; padding: 0 1px 2px 4px; }
.bar-c { flex: 1; padding: 0 3px 2px 2px; gap: 6px; }
.bar-c .caret { margin: 0 1px 0 2px; }
.boxed { height: 23px; padding: 0 1px 0 2px; border: 1px solid #555; }

/* workspace */
.workspace { flex: 1; min-height: 0; display: flex; gap: 6px; }
.nav { width: 165px; display: flex; flex-direction: column; border-right: 1px solid #9a9a9a; padding-bottom: 2px; }
.navhead { display: flex; align-items: center; gap: 8px; height: 15px; padding-right: 3px; border: 1px solid #777; border-left: 0; }
.navhead span { flex: 1; font-size: 12px; line-height: 13px; }
.pin { width: 10px; height: 12px; }
.navbtn { height: 22px; flex: none; background: #eee; border: 1px solid #999; border-top-color: #b0b0b0; box-shadow: inset 1px 1px #fff; }
.navhead + .navbtn { margin-top: 1px; }
.navtools { height: 27px; padding: 7px 6px 0; flex: none; background: linear-gradient(#fcfcfc, #eee); }
.tree { overflow: hidden; }
.tree li { height: 16px; display: flex; align-items: center; white-space: nowrap; }
.navtree { flex: 1; min-height: 0; margin: 0 1px 1px 2px; padding-top: 2px; background: #fff; border: 1px solid #7a7a7a; }
.chev { width: 9px; height: 9px; }
.fold { width: 16px; height: 14px; margin: 0 4px 0 7px; }
.l1 { padding-left: 7px; }
.tree .l2 {
  padding-left: 43px; gap: 4px;
  background:
    repeating-linear-gradient(#888 0 1px, transparent 1px 2px) 31px 0 / 1px 100% no-repeat,
    repeating-linear-gradient(90deg, #888 0 1px, transparent 1px 2px) 32px 8px / 10px 1px no-repeat;
}
.l2 .ic { width: 15px; }
.tree .l2.thru {
  background:
    repeating-linear-gradient(#888 0 1px, transparent 1px 2px) 12px 0 / 1px 100% no-repeat,
    repeating-linear-gradient(#888 0 1px, transparent 1px 2px) 31px 0 / 1px 100% no-repeat,
    repeating-linear-gradient(90deg, #888 0 1px, transparent 1px 2px) 32px 8px / 10px 1px no-repeat;
}
.curtext, .cur .ic { background: #dadada; }
.cur .ic { box-shadow: 4px 0 #dadada, -2px 0 #dadada; }
.book { width: 14px; height: 14px; margin-left: -3px; }
.new { font: bold 9px/9px "DejaVu Sans", sans-serif; background: #ffd800; margin: 0 0 6px -3px; }

.main { flex: 1; min-width: 0; display: flex; flex-direction: column; }
.bar-d { height: 28px; padding-left: 4px; flex: none; }
.bar-d .floorlabel { margin-left: -4px; }
.bar-d select {
  width: 66px; height: 22px; padding-left: 6px; margin: 0 -2px 0 -5px; appearance: none;
  background: linear-gradient(#000, #000) 56px 10px / 5px 1px no-repeat, linear-gradient(#000, #000) 57px 11px / 3px 1px no-repeat, linear-gradient(#000, #000) 58px 12px / 1px 1px no-repeat, #fff;
}
.bar-d .mv { gap: 7px; }
.panes { flex: 1; min-height: 0; display: flex; gap: 5px; }
.list { width: 185px; display: flex; flex-direction: column; margin: 3px 0 3px; border-right: 2px solid #8a8f98; background: #fff; }
.search { display: flex; height: 28px; padding: 2px 0 3px 1px; gap: 5px; align-items: center; }
.search input { width: 157px; height: 24px; padding: 0 2px 3px; border: 1px solid #777; background: #fff; }
.search ::placeholder, .cortana ::placeholder { color: #808080; opacity: 1; }
.listbox { flex: 1; min-height: 0; display: flex; border: 1px solid #6e7078; border-right: 0; border-bottom: 2px solid #8a8f98; }
.listbox .tree { flex: 1; }
.root { padding-left: 7px; }
.root .ic { margin: 0 4px 0 8px; }
.tree .z {
  padding-left: 40px; font: 10px/16px "DejaVu Sans Mono", monospace;
  background:
    repeating-linear-gradient(#888 0 1px, transparent 1px 2px) 31px 0 / 1px 100% no-repeat,
    repeating-linear-gradient(90deg, #888 0 1px, transparent 1px 2px) 32px 8px / 10px 1px no-repeat;
}
.z span { display: flex; align-items: center; gap: 7px; padding: 0 4px; height: 16px; }
.z svg { width: 12px; height: 12px; }
.on span { background: #2a62c0; }

.scroll { width: 16px; flex: none; display: flex; flex-direction: column; align-items: center; background: #f0f0f0; }
.scroll svg { width: 9px; height: 9px; margin: 4px 0; }
.thumb { width: 100%; background: #cdcdcd; }
.thumb + svg { margin-top: auto; }
.short { height: 198px; }
.long { height: 384px; }

.props { flex: 1; min-width: 0; display: flex; flex-direction: column; padding: 0 4px 5px 0; background: #fff; }
.proptabs { display: flex; height: 21px; border-bottom: 1px solid #dcdcdc; }
.proptabs button { width: 60px; margin-bottom: -1px; background: #fff; border-right: 1px solid #dcdcdc; border-top: 1px solid #dcdcdc; }
.propbox { flex: 1; min-height: 0; display: flex; margin: 3px 0 0 1px; padding: 1px; border: 1px solid #8a8a8a; }
.tablewrap { flex: 1; overflow: hidden; }
.propbox table { border-collapse: collapse; table-layout: fixed; width: 335px; }
.propbox tr { height: 19px; }
.propbox thead tr { height: 23px; }
.propbox td, .propbox th { padding: 0 0 0 2px; font-weight: normal; border: 1px solid #b8b8b8; border-left: 0; white-space: nowrap; overflow: hidden; line-height: 16px; }
.propbox thead th { border-top: 0; }
.propbox .n { width: 21px; }
.propbox .k { width: 190px; }
.propbox th { background: linear-gradient(#fff, #f0f0f0); text-align: center; padding: 0; }
.propbox th.v { background: linear-gradient(#fadf9f, #f2bd5c); color: #5c1248; }
.propbox tbody th { font: 10px/16px "DejaVu Sans Mono", monospace; }
.propbox td:nth-child(2) { padding-left: 19px; }
.sel td { background: #dcebfa; }
.sel td:nth-child(2) { background: #0078d7; color: #fff; }
.propbox .sel th { background: #fbcd84; color: #5c1248; }
.link td:nth-child(2) { color: #00f; }
.dim td { color: #8a8a8a; }

/* status bar */
.status { display: flex; gap: 2px; height: 21px; padding-top: 1px; }
.status span { padding: 0 2px; line-height: 18px; border: 1px solid #d4d4d4; background: linear-gradient(#fcfcfc, #f0f0f0); white-space: nowrap; }
.s1 { width: 148px; } .s2 { width: 78px; } .s3 { width: 98px; } .s4 { width: 48px; } .s5 { flex: 1; } .s6 { width: 71px; }

/* taskbar */
.taskbar { display: flex; height: 40px; flex: none; background: #020b0e; color: #e8e8e8; }
.start { width: 48px; display: grid; place-items: center; background: #000; }
.cortana { width: 344px; display: flex; align-items: center; gap: 5px; padding: 0 14px 0 9px; background: #333; }
.cortana input { flex: 1; font-size: 14px; min-width: 0; }
.cortana ::placeholder { color: #9a9a9a; }
.apps { display: flex; flex: 1; }
.apps button { width: 50px; display: grid; place-items: center; }
.apps svg { width: 24px; height: 24px; }
.apps .open { background: linear-gradient(#76b9ed, #76b9ed) 50% 100% / 40px 3px no-repeat; }
.apps .active { background: linear-gradient(#76b9ed, #76b9ed) 50% 100% / 48px 3px no-repeat, #343c40; }
.c-white { color: #e8e8e8; }
.c-edge { color: #0a78d8; }
.c-ie { color: #35a6f0; }
.tray { display: flex; align-items: center; gap: 10px; padding-right: 4px; border-right: 1px solid #555; margin-right: 4px; }
.tray > svg { fill: none; stroke: #fff; }
.tray .nostroke { stroke: none; }
.two { text-align: center; line-height: 18px; padding: 0 8px; }
.zh { font-size: 13px; }
.action { position: relative; width: 34px; height: 40px; padding: 3px 0 0 3px; }
.action b { position: absolute; right: 3px; bottom: 3px; width: 21px; height: 21px; border-radius: 50%; border: 1px solid #777; background: #333; font-size: 11px; line-height: 19px; color: #fff; text-align: center; }

/* section editor window */
.editor { position: absolute; left: 668px; top: 132px; right: 22px; height: 571px; display: flex; flex-direction: column; padding: 0 6px 7px 7px; border: 1px solid #444; background: #d7e3f1; }
.editor h2 { height: 30px; margin: 0 -6px 0 -7px; padding: 4px 7px 0; line-height: 30px; color: #9a9a9a; background: linear-gradient(#bccad9, #d7e3f1); }
.ebody { flex: 1; min-height: 0; display: flex; flex-direction: column; background: #f0f0f0; }
.etabs { display: flex; align-items: flex-end; height: 21px; }
.etabs button { width: 39px; height: 19px; border: 1px solid #dcdcdc; border-bottom: 0; }
.etabs .on { width: 46px; height: 21px; background: #fff; border: 0; padding-right: 6px; }
.epanel { flex: 1; min-height: 0; display: flex; flex-direction: column; margin-bottom: 3px; padding: 2px 4px 2px 3px; border: 1px solid #dcdcdc; background: #fff; }
.ebar { height: 28px; flex: none; padding-left: 4px; }
.ebar.tools { gap: 6px; padding-left: 5px; }
.grip { width: 2px; height: 15px; margin-right: -3px; flex: none; background: repeating-linear-gradient(#b8b8b8 0 2px, transparent 2px 4px); }
.radios { display: flex; align-items: center; gap: 7px; padding-right: 11px; margin: 0 -4px 0 -1px; background: #f0f0f0; height: 24px; }
.radios label { display: flex; align-items: center; gap: 8px; }
.radios input { appearance: none; width: 11px; height: 11px; border: 1px solid #777; border-radius: 50%; background: #fff; }
.radios input:checked { background: radial-gradient(circle, #111 0 3px, #fff 4px); }
.radios label:first-child { padding: 0 4px 0 1px; }
.xy { margin: 0 1px 0 -4px; }
.mm + .xy { margin-left: 7px; }
.num { display: flex; align-items: center; width: 78px; height: 22px; padding-right: 3px; border: 1px solid #777; background: #f6f6f6; }
.num input { flex: 1; min-width: 0; text-align: right; padding-right: 8px; color: #8a8a8a; }
.num svg { width: 8px; height: 16px; }
.mm { margin-left: -2px; }
.canvas { flex: 1; min-height: 0; background: #000; overflow: hidden; }
.gray { font: 11px "DejaVu Sans Mono", monospace; fill: #c0c0c0; }
.lime { font: bold 14px "DejaVu Sans Mono", monospace; fill: #0f0; }
.dyn { height: 26px; flex: none; background: #f0f0f0; }
.dyn button { width: 62px; height: 26px; background: linear-gradient(#fff, #f2f2f2); }
.estatus { display: flex; align-items: stretch; gap: 2px; height: 23px; flex: none; border: 1px solid #dcdcdc; background: linear-gradient(#fcfcfc, #f0f0f0); }
.estatus span { font-family: "Liberation Sans", "Noto Sans CJK SC", sans-serif; line-height: 21px; white-space: nowrap; padding-left: 1px; }
.estatus span:first-child { min-width: 97px; border-right: 1px solid #dcdcdc; }
.estatus span:nth-child(2) { flex: 1; }
.estatus svg { align-self: flex-end; }

/* grid dialog */
.dialog { position: absolute; left: 373px; top: 272px; width: 411px; border: 1px solid #2a8dea; background: #f0f0f0; box-shadow: 0 3px 9px rgba(0, 0, 0, .3); }
.dtitle { display: flex; justify-content: space-between; align-items: center; height: 25px; padding: 0 9px 0 3px; background: #fff; }
.dbody { padding: 15px 14px 8px 13px; }
.dbody fieldset { margin: 0 0 8px; padding: 1px 8px 7px 7px; border: 1px solid #dcdcdc; height: 65px; min-width: 0; }
.dbody legend { padding: 0 4px 0 0; line-height: 16px; height: 16px; white-space: nowrap; }
.dbody textarea { display: block; width: 100%; height: 41px; padding: 1px 2px; border: 1px solid #777; background: #fff; resize: none; overflow: hidden; font: 10px/14px "DejaVu Sans Mono", monospace; }
.dbody .focus { border-color: #3c70a4; }
.dbody textarea::selection { background: #0078d7; color: #fff; }
.dbtns { display: flex; justify-content: flex-end; gap: 15px; margin-top: 12px; }
.dbtns button { width: 72px; height: 23px; border: 1px solid #adadad; background: #e1e1e1; }

/* floating overlays */
.ime { position: absolute; left: 999px; top: 3px; width: 207px; height: 24px; display: flex; align-items: center; gap: 6px; padding-right: 3px; border: 1px solid #a9c3dd; background: #fff; color: #1b74c5; }
.ime svg { width: 16px; height: 16px; }
.ime .logo { width: 28px; height: 27px; margin: -5px 0 0 -1px; }
.ime b { font-size: 15px; width: 15px; }
.ball { position: absolute; left: 602px; top: -27px; width: 46px; height: 46px; border-radius: 50%; padding-top: 24px; text-align: center; font-weight: bold; color: #fff; background: #41c35f; border: 2px solid #6b8a72; box-shadow: 0 3px 6px rgba(0, 0, 0, .35); }
.marks { position: absolute; left: 300px; top: 120px; pointer-events: none; }
```
FILE: app.js
```js
const spacing = document.getElementById('hs');
spacing.focus();
spacing.select();
```
